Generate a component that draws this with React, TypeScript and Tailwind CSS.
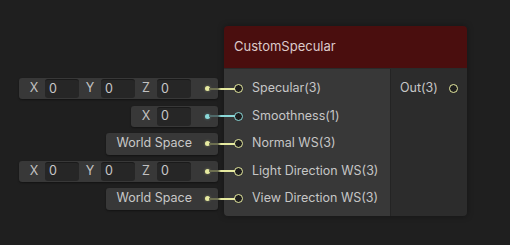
import React from "react";

const YEL = "#e6eaa0";
const CYAN = "#8ad8d8";

function Dot({ color }: { color: string }) {
  return (
    <div
      className="w-[5px] h-[5px] rounded-full shrink-0"
      style={{ backgroundColor: color, boxShadow: `0 0 3px ${color}66` }}
    />
  );
}

function Field({ label }: { label: string }) {
  return (
    <>
      <div className="w-[22px] text-center text-[#c2c2c2]">{label}</div>
      <div className="w-[34px] h-[19px] rounded-[3px] bg-[#262626] border-t border-[#1a1a1a] flex items-center pl-[4px] text-[#c8c8c8]">
        0
      </div>
    </>
  );
}

function Connector({ color, dim }: { color: string; dim: string }) {
  return (
    <div
      className="absolute z-10 left-[209px] w-[26px] h-[2px] top-1/2 -translate-y-1/2"
      style={{ background: `linear-gradient(to right, ${dim} 0px, ${dim} 9px, ${color} 12px, ${color} 100%)` }}
    />
  );
}

function InputRow({ children, color, dim }: { children: React.ReactNode; color: string; dim: string }) {
  return (
    <div className="relative h-[27.5px] flex items-center justify-end pr-[6px]">
      {children}
      <Connector color={color} dim={dim} />
    </div>
  );
}

function XYZ() {
  return (
    <div className="h-[21px] flex items-center rounded-[3px] bg-[#383838] pl-[4px] pr-[8px] shadow-[0_1px_2px_rgba(0,0,0,0.4)]">
      <Field label="X" />
      <Field label="Y" />
      <Field label="Z" />
      <div className="ml-[14px]"><Dot color={YEL} /></div>
    </div>
  );
}

function WorldSpace() {
  return (
    <div className="h-[22px] flex items-center rounded-[3px] bg-[#383838] pl-[10px] pr-[8px] text-[#c8c8c8] shadow-[0_1px_2px_rgba(0,0,0,0.4)]">
      <span>World Space</span>
      <div className="ml-[13px]"><Dot color={YEL} /></div>
    </div>
  );
}

function Port({ color }: { color: string }) {
  return (
    <div
      className="relative z-20 w-[9px] h-[9px] rounded-full shrink-0 bg-[#1e1e1e] border-[1.5px]"
      style={{ borderColor: color }}
    />
  );
}

function NodeInput({ label, color }: { label: string; color: string }) {
  return (
    <div className="h-[27.5px] flex items-center pl-[10px]">
      <Port color={color} />
      <span className="ml-[9px] text-[#c6c6c6]">{label}</span>
    </div>
  );
}

export default function App() {
  return (
    <div
      className="w-[510px] h-[245px] bg-[#1f1f1f] overflow-hidden text-[12.5px]"
      style={{ fontFamily: "Inter, 'Noto Sans', sans-serif" }}
    >
      <div className="flex pt-[26px]">
        <div className="relative z-10 w-[224px] pt-[49px]">
          <InputRow color={YEL} dim="#6d6f50">
            <XYZ />
          </InputRow>
          <InputRow color={CYAN} dim="#4f6a6a">
            <div className="h-[21px] flex items-center rounded-[3px] bg-[#383838] pl-[4px] pr-[8px] shadow-[0_1px_2px_rgba(0,0,0,0.4)]">
              <Field label="X" />
              <div className="ml-[14px]"><Dot color={CYAN} /></div>
            </div>
          </InputRow>
          <InputRow color={YEL} dim="#6d6f50">
            <WorldSpace />
          </InputRow>
          <InputRow color={YEL} dim="#6d6f50">
            <XYZ />
          </InputRow>
          <InputRow color={YEL} dim="#6d6f50">
            <WorldSpace />
          </InputRow>
        </div>
        <div className="w-[243px] relative z-0 shadow-[0_0_6px_rgba(0,0,0,0.35)] rounded-[4px] overflow-hidden">
          <div className="h-[42px] bg-[#4a0e0e] flex items-center pl-[10px] text-[13px] text-[#dccaca]">
            CustomSpecular
          </div>
          <div className="flex border-t border-[#2a2a2a]">
            <div className="w-[166px] bg-[#383838] pt-[6px] pb-[3px]">
              <NodeInput label="Specular(3)" color={YEL} />
              <NodeInput label="Smoothness(1)" color={CYAN} />
              <NodeInput label="Normal WS(3)" color={YEL} />
              <NodeInput label="Light Direction WS(3)" color={YEL} />
              <NodeInput label="View Direction WS(3)" color={YEL} />
            </div>
            <div className="flex-1 bg-[#2c2c2c] border-l border-[#242424] pt-[6px]">
              <div className="h-[27.5px] flex items-center pl-[9px] text-[#c6c6c6]">
                <span>Out(3)</span>
                <div className="ml-[11px]"><Port color={YEL} /></div>
              </div>
            </div>
          </div>
        </div>
      </div>
    </div>
  );
}
